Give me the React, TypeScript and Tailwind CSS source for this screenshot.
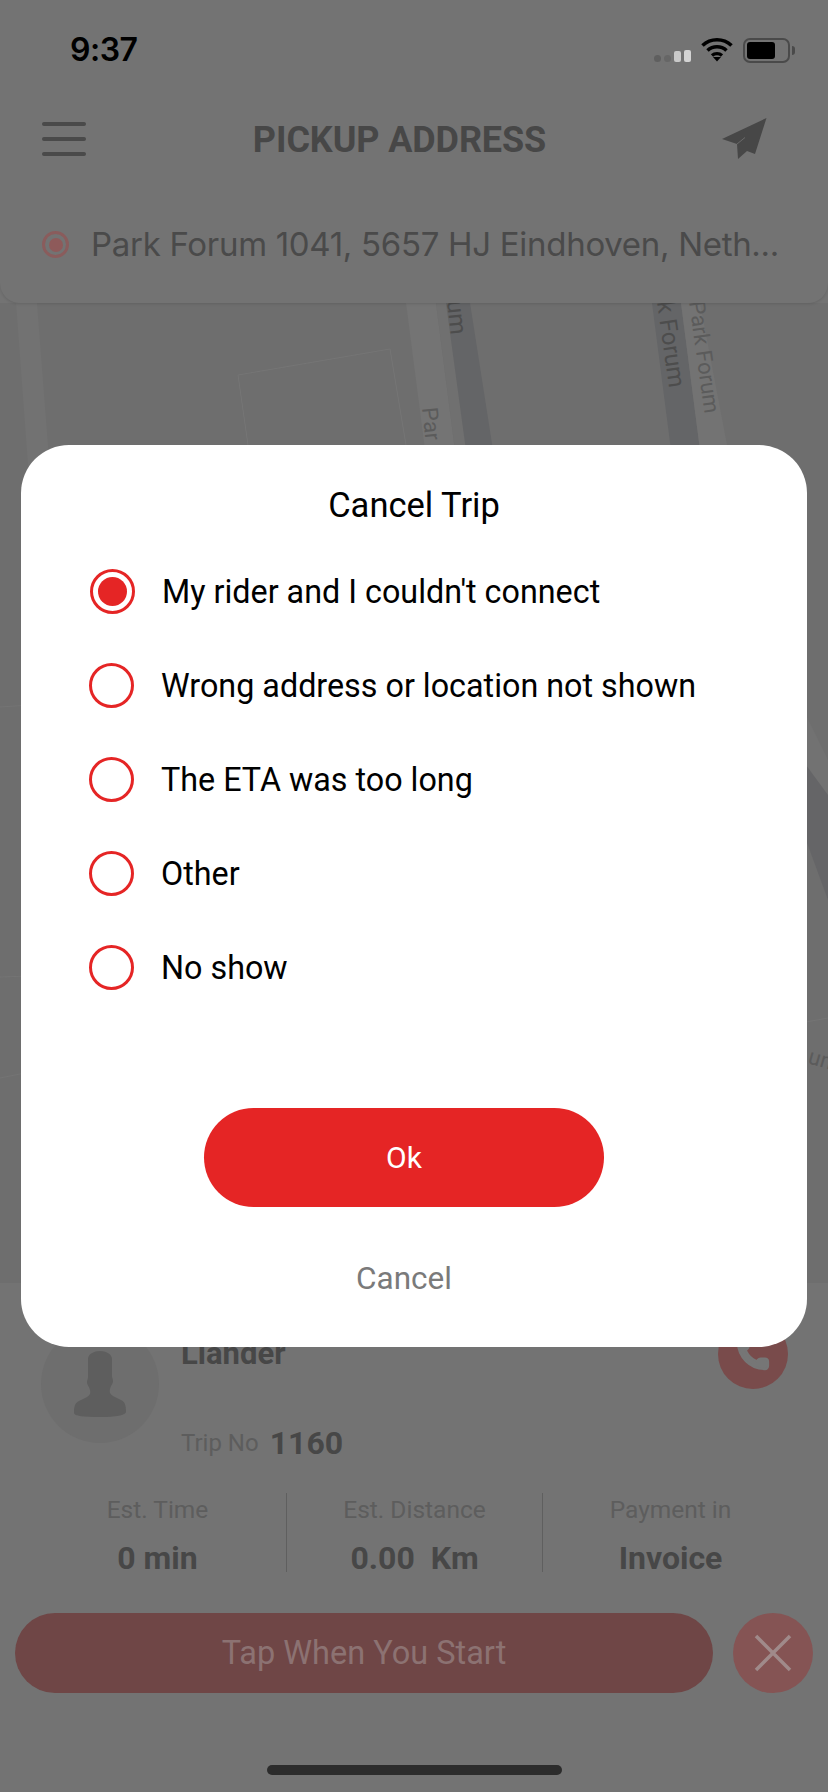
import { Phone } from "lucide-react";

const reasons = [
  "My rider and I couldn't connect",
  "Wrong address or location not shown",
  "The ETA was too long",
  "Other",
  "No show",
];

const stats = [
  { label: "Est. Time", value: "0 min" },
  { label: "Est. Distance", value: "0.00\u00a0\u00a0Km" },
  { label: "Payment in", value: "Invoice" },
];

function StatusBar() {
  return (
    <div className="flex h-[100px] items-center justify-between pl-[70px] pr-[33px]">
      <span className="font-['Inter',sans-serif] text-[32px] font-semibold tracking-[-0.5px] text-black">9:37</span>
      <div className="flex items-center">
        <div className="mt-[12px] flex items-end gap-[3px]">
          <span className="h-[7px] w-[7px] rounded-full bg-[#5f5f5f]" />
          <span className="h-[7px] w-[7px] rounded-full bg-[#666666]" />
          <span className="h-[11px] w-[7px] rounded-[2px] bg-[#c9c9c9]" />
          <span className="h-[12px] w-[7px] rounded-[2px] bg-[#d4d4d4]" />
        </div>
        <svg className="ml-[10px] mt-[-2px]" width="32" height="25" viewBox="0 0 32 25">
          <path d="M1.5 8.5a21 21 0 0 1 29 0" fill="none" stroke="#000" strokeWidth="3.6" />
          <path d="M6.5 13.5a14 14 0 0 1 19 0" fill="none" stroke="#000" strokeWidth="3.6" />
          <path d="M11 18.5a7.5 7.500 0 0 1 10 0" fill="none" stroke="#000" strokeWidth="3.4" />
          <path d="M16 24.5l-4-4.5h8z" fill="#000" />
        </svg>
        <div className="ml-[10px] flex items-center">
          <div className="flex h-[25px] w-[47px] items-center rounded-[7px] border-[2px] border-[#4a4a4a] pl-[2px]">
            <div className="h-[17px] w-[28px] rounded-[3px] bg-black" />
          </div>
          <div className="ml-[2px] h-[9px] w-[3px] rounded-r-[3px] bg-[#4a4a4a]" />
        </div>
      </div>
    </div>
  );
}

function Header() {
  return (
    <div className="relative z-10 h-[303px] shrink-0 rounded-b-[20px] bg-[#737373] shadow-[0_1px_3px_rgba(0,0,0,0.12)]">
      <StatusBar />
      <div className="flex h-[78px] items-center justify-between pl-[42px] pr-[61px]">
        <div className="flex w-[44px] flex-col gap-[11px]">
          <span className="h-[4px] rounded-full bg-[#4a4a4a]" />
          <span className="h-[4px] rounded-full bg-[#4a4a4a]" />
          <span className="h-[4px] rounded-full bg-[#4a4a4a]" />
        </div>
        <span className="ml-[-8px] mt-[2px] font-['Roboto',sans-serif] text-[36px] font-bold tracking-[-0.1px] text-[#474747]">PICKUP ADDRESS</span>
        <svg width="46" height="42" viewBox="721 122 46 42">
          <path d="M766.5 122L722 143l15 5 1 15 9-8 8 3z" fill="#474747" />
          <path d="M737 148l8-6.500" stroke="#6a6a6a" strokeWidth="1" />
        </svg>
      </div>
      <div className="mt-[46px] flex items-center pl-[42px] pr-[48px]">
        <div className="mt-[1px] flex h-[27px] w-[27px] shrink-0 items-center justify-center rounded-full border-[3px] border-[#8a5c5c]">
          <div className="h-[14px] w-[14px] rounded-full bg-[#8e5a5a]" />
        </div>
        <span className="ml-[22px] truncate font-['Inter',sans-serif] text-[33px] leading-[40px] tracking-[-0.3px] text-[#4a4a4a]">
          Park Forum 1041, 5657 HJ Eindhoven, Neth...
        </span>
      </div>
    </div>
  );
}

function MapArea() {
  const label = "Roboto, sans-serif";
  return (
    <div className="relative min-h-0 flex-1 bg-[#6e6e6e]">
      <svg className="block h-full w-full" viewBox="0 303 828 980" preserveAspectRatio="none">
        <polygon points="16,303 37,303 60,600 38,600" fill="#727272" />
        <polygon points="406,303 436,303 455,450 425,450" fill="#747474" />
        <polygon points="436,303 446,303 466,450 455,450" fill="#707070" />
        <polygon points="446,303 470,303 493,450 466,450" fill="#646567" />
        <polygon points="652,303 681,303 700,450 671,450" fill="#646567" />
        <polygon points="681,303 700,303 728,450 700,450" fill="#737373" />
        <polyline points="248,445 238,375 390,349 406,445" fill="none" stroke="#757575" strokeWidth="1" />
        <line x1="0" y1="707" x2="30" y2="705" stroke="#747474" />
        <line x1="0" y1="977" x2="30" y2="976" stroke="#747474" />
        <line x1="0" y1="1078" x2="30" y2="1072" stroke="#747474" />
        <line x1="806" y1="1022" x2="828" y2="1018" stroke="#747474" />
        <polygon points="806,715 828,760 828,860 806,770" fill="#727272" />
        <polygon points="806,765 828,795 828,900 806,840" fill="#656567" />
        <text transform="translate(447,301) rotate(84)" fontFamily={label} fontSize="24" fill="#4d4d4d">um</text>
        <text transform="translate(422,408) rotate(84)" fontFamily={label} fontSize="22" fill="#5b5b5b">Par</text>
        <text transform="translate(657,302) rotate(82)" fontFamily={label} fontSize="24" fill="#4d4d4d">k Forum</text>
        <text transform="translate(689,302) rotate(82)" fontFamily={label} fontSize="22" fill="#5b5b5b">Park Forum</text>
        <text transform="translate(807,1063) rotate(16)" fontFamily={label} fontSize="22" fill="#5b5b5b">um</text>
      </svg>
    </div>
  );
}

function BottomPanel() {
  return (
    <div className="h-[509px] shrink-0 bg-[#737373] pt-[36px]">
      <div className="flex pl-[41px] pr-[40px]">
        <div className="mt-[6px] flex h-[118px] w-[118px] shrink-0 items-center justify-center rounded-full bg-[#6e6e6e]">
          <svg width="52" height="67" viewBox="0 0 52 67">
            <path d="M14 8c0-5 6-8 12-8s12 3 12 8v17c0 2 1 3 1 5 0 3-2 4-3 8-1 3 0 5 3 7l8 4c4 2 5 5 5 12 0 3-10 5-26 5S0 65 0 62c0-7 1-10 5-12l8-4c3-2 4-4 3-7-1-4-3-5-3-8 0-2 1-3 1-5z" fill="#5e5e5e" />
          </svg>
        </div>
        <div className="ml-[22px] flex-1">
          <div className="flex h-[70px] items-center justify-between">
            <span className="mt-[1px] font-['Roboto',sans-serif] text-[31px] font-bold text-[#474747]">Liander</span>
            <div className="flex h-[70px] w-[70px] items-center justify-center rounded-full bg-[#794b4b]">
              <Phone className="h-[36px] w-[36px] text-[#767676]" fill="#767676" strokeWidth={1.5} />
            </div>
          </div>
          <div className="mt-[36px] flex h-[36px] items-center">
            <span className="font-['Roboto',sans-serif] text-[24px] text-[#5d5d5d]">Trip No</span>
            <span className="ml-[11px] font-['Roboto',sans-serif] text-[32px] font-bold text-[#474747]">1160</span>
          </div>
        </div>
      </div>
      <div className="mt-[32px] flex h-[79px] px-[29px]">
        {stats.map((s, i) => (
          <div
            key={s.label}
            className={
              i === 0
                ? "flex w-[257px] flex-col items-center"
                : "flex w-[256px] flex-col items-center border-l-[1px] border-[#5f5f5f]"
            }
          >
            <span className="mt-[1px] h-[32px] font-['Roboto',sans-serif] text-[24.5px] leading-[32px] text-[#5d5d5d]">{s.label}</span>
            <span className="mt-[14px] font-['Roboto',sans-serif] text-[32px] font-bold leading-[36px] text-[#474747]">{s.value}</span>
          </div>
        ))}
      </div>
      <div className="mt-[41px] flex pl-[15px] pr-[15px]">
        <div className="flex h-[80px] w-[698px] items-center justify-center rounded-full bg-[#6f4646]">
          <span className="mt-[1px] font-['Roboto',sans-serif] text-[32.500px] text-[#8c7272]">Tap When You Start</span>
        </div>
        <div className="ml-[20px] flex h-[80px] w-[80px] items-center justify-center rounded-full bg-[#855454]">
          <svg width="38" height="38" viewBox="0 0 38 38">
            <path d="M2 2l34 34M36 2L2 36" stroke="#a08a8a" strokeWidth="3.5" />
          </svg>
        </div>
      </div>
      <div className="mx-auto mt-[72px] h-[10px] w-[295px] rounded-full bg-[#2c2c2c]" />
    </div>
  );
}

function CancelDialog() {
  return (
    <div className="absolute left-[21px] top-[445px] h-[902px] w-[786px] rounded-[48px] bg-white">
      <h2 className="mt-[40px] text-center font-['Roboto',sans-serif] text-[34.500px] font-normal leading-[40px] text-black">Cancel Trip</h2>
      <div className="mt-[44px] flex flex-col gap-[49px] pl-[68px]">
        {reasons.map((r, i) => (
          <div key={r} className={i === 0 ? "ml-[1px] flex h-[45px] items-center" : "flex h-[45px] items-center"}>
            <div className="flex h-[45px] w-[45px] shrink-0 items-center justify-center rounded-full border-[3px] border-[#e52525]">
              {i === 0 && <div className="h-[29px] w-[29px] rounded-full bg-[#e52525]" />}
            </div>
            <span className="ml-[27px] font-['Roboto',sans-serif] text-[32.300px] leading-[40px] text-black">{r}</span>
          </div>
        ))}
      </div>
      <div className="ml-[183px] mt-[118px] flex h-[99px] w-[400px] items-center justify-center rounded-full bg-[#e52525]">
        <span className="font-['Roboto',sans-serif] text-[30px] text-white">Ok</span>
      </div>
      <div className="ml-[183px] mt-[54px] w-[400px] text-center font-['Roboto',sans-serif] text-[31.500px] leading-[36px] text-[#7a7a7a]">Cancel</div>
    </div>
  );
}

export default function App() {
  return (
    <div className="relative flex h-[1792px] w-[828px] flex-col overflow-hidden bg-[#737373]">
      <Header />
      <MapArea />
      <BottomPanel />
      <CancelDialog />
    </div>
  );
}
